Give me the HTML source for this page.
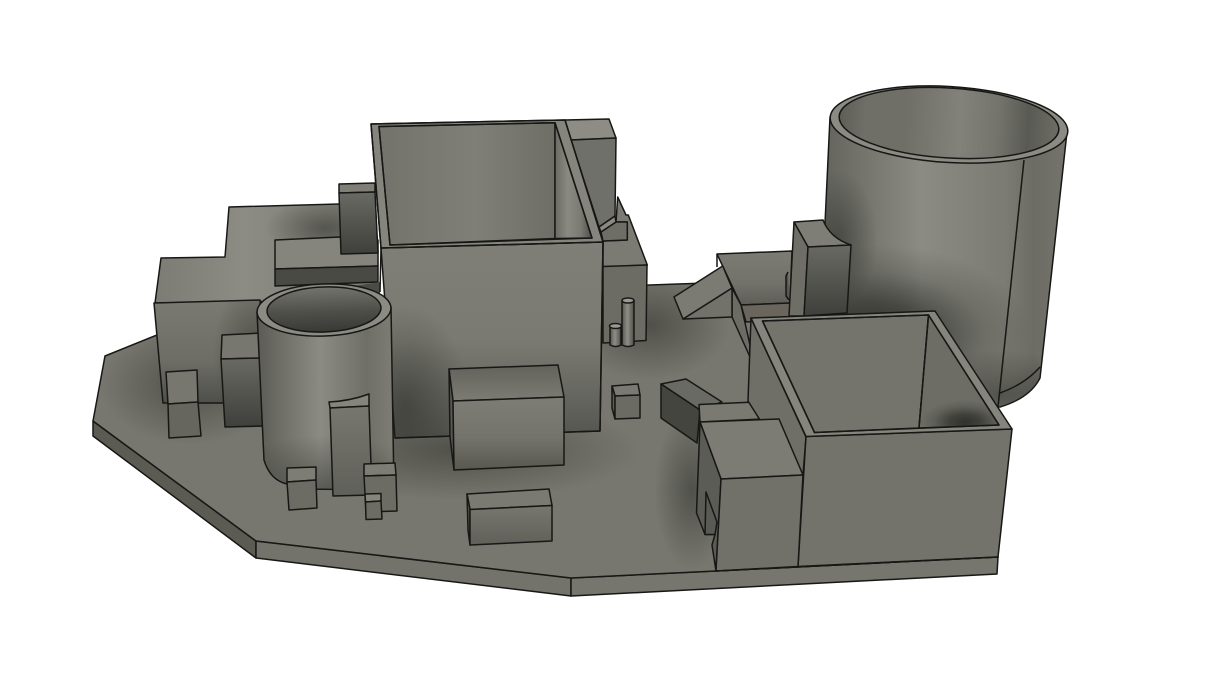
<!DOCTYPE html>
<html><head><meta charset="utf-8"><style>html,body{margin:0;padding:0;background:#fff;width:1223px;height:689px;overflow:hidden}svg{display:block}</style></head><body>
<svg width="1223" height="689" viewBox="0 0 1223 689" xmlns="http://www.w3.org/2000/svg">
<defs>
<radialGradient id="ao"><stop offset="0" stop-color="#2a2a26" stop-opacity=".9"/><stop offset=".35" stop-color="#2a2a26" stop-opacity=".65"/><stop offset=".7" stop-color="#2a2a26" stop-opacity=".2"/><stop offset="1" stop-color="#2a2a26" stop-opacity="0"/></radialGradient>
<radialGradient id="aoS"><stop offset="0" stop-color="#2a2a26" stop-opacity=".5"/><stop offset=".5" stop-color="#2a2a26" stop-opacity=".25"/><stop offset="1" stop-color="#2a2a26" stop-opacity="0"/></radialGradient>
<filter id="b6" x="-200%" y="-400%" width="500%" height="900%"><feGaussianBlur stdDeviation="6"/></filter>
<filter id="b14" x="-300%" y="-300%" width="700%" height="700%"><feGaussianBlur stdDeviation="14"/></filter>
<linearGradient id="v1" x1="0" y1="0" x2="0" y2="1"><stop offset="0" stop-color="#7d7d75"/><stop offset=".55" stop-color="#74746d"/><stop offset="1" stop-color="#58584f"/></linearGradient>
<linearGradient id="v2" x1="0" y1="0" x2="0" y2="1"><stop offset="0" stop-color="#77776f"/><stop offset="1" stop-color="#60605a"/></linearGradient>
<linearGradient id="v4" x1="0" y1="0" x2="0" y2="1"><stop offset="0" stop-color="#62625c"/><stop offset="1" stop-color="#7c7c74"/></linearGradient>
<linearGradient id="v3" x1="0" y1="0" x2="0" y2="1"><stop offset="0" stop-color="#6a6a64"/><stop offset="1" stop-color="#3f3f3b"/></linearGradient>
<linearGradient id="v5" x1="0" y1="0" x2="0" y2="1"><stop offset="0" stop-color="#7c7c74"/><stop offset=".6" stop-color="#72726b"/><stop offset="1" stop-color="#5e5e58"/></linearGradient>
<linearGradient id="tower" x1="0" y1="0" x2="0" y2="1"><stop offset="0" stop-color="#7f7f77"/><stop offset=".5" stop-color="#7a7a72"/><stop offset=".8" stop-color="#65655f"/><stop offset="1" stop-color="#55554f"/></linearGradient>
<linearGradient id="bld" x1="0" y1="0" x2="0" y2="1"><stop offset="0" stop-color="#7a7a72"/><stop offset=".6" stop-color="#6d6d66"/><stop offset="1" stop-color="#4f4f4a"/></linearGradient>
<linearGradient id="back" x1="0" y1="0" x2="1" y2="0"><stop offset="0" stop-color="#73736c"/><stop offset=".55" stop-color="#7f7f77"/><stop offset="1" stop-color="#6e6e67"/></linearGradient>
<linearGradient id="rwall" x1="0" y1="0" x2="1" y2="0"><stop offset="0" stop-color="#6a6a63"/><stop offset=".35" stop-color="#8a8a82"/><stop offset=".7" stop-color="#7a7a72"/><stop offset="1" stop-color="#4f4f4a"/></linearGradient>
<linearGradient id="top" x1="0" y1="0" x2="1" y2="0"><stop offset="0" stop-color="#7c7c74"/><stop offset=".4" stop-color="#8c8c84"/><stop offset="1" stop-color="#7a7a72"/></linearGradient>
<linearGradient id="cylB" gradientUnits="userSpaceOnUse" x1="824" y1="0" x2="1067" y2="0"><stop offset="0" stop-color="#64645e"/><stop offset=".16" stop-color="#74746d"/><stop offset=".4" stop-color="#8b8b84"/><stop offset=".75" stop-color="#7b7b73"/><stop offset=".86" stop-color="#6c6c65"/><stop offset="1" stop-color="#74746c"/></linearGradient>
<linearGradient id="cylI" gradientUnits="userSpaceOnUse" x1="839" y1="0" x2="1059" y2="0"><stop offset="0" stop-color="#5e5e58"/><stop offset=".12" stop-color="#6f6f68"/><stop offset=".3" stop-color="#6f6f68"/><stop offset=".55" stop-color="#82827a"/><stop offset=".72" stop-color="#74746d"/><stop offset=".86" stop-color="#5a5a54"/><stop offset="1" stop-color="#6d6d66"/></linearGradient>
<linearGradient id="smB" gradientUnits="userSpaceOnUse" x1="257" y1="0" x2="394" y2="0"><stop offset="0" stop-color="#5b5b55"/><stop offset=".15" stop-color="#6c6c65"/><stop offset=".46" stop-color="#8b8b84"/><stop offset=".8" stop-color="#6f6f68"/><stop offset="1" stop-color="#7d7d75"/></linearGradient>
<linearGradient id="smI" x1="0" y1="0" x2="0" y2="1"><stop offset="0" stop-color="#74746d"/><stop offset=".55" stop-color="#4f4f4a"/><stop offset="1" stop-color="#383835"/></linearGradient>
<linearGradient id="pin" x1="0" y1="0" x2="1" y2="0"><stop offset="0" stop-color="#56564f"/><stop offset=".45" stop-color="#8e8e86"/><stop offset="1" stop-color="#4f4f4a"/></linearGradient>
<clipPath id="cPlate"><polygon points="93,421 105,356 157,335 400,300 650,285 790,280 800,400 998,557 716,571 571,578 256,541"/></clipPath>
<clipPath id="cBig"><path d="M830,117 L820,330 L900,405 L1000,407 Q1030,398 1040,378 L1042,360 L1067,132 Z"/></clipPath>
<clipPath id="cBld"><polygon points="154,303 260,300 265,403 163,403"/></clipPath>
<clipPath id="cTop"><path d="M229,207 L339,204 L375,204 L378,300 L155,303 L161,258 L225,257 Z"/></clipPath>
<clipPath id="cSm"><path d="M257,312 L264,460 Q270,480 300,489 L394,490 L391,307 Z"/></clipPath>
<clipPath id="cTow"><polygon points="381,248 603,242 600,431 395,438"/></clipPath>
<clipPath id="cG"><polygon points="762.500,321 928.500,315 999,425 814.500,432.500"/></clipPath>
</defs>
<g stroke="#171715" stroke-width="1.5" stroke-linejoin="round">
<!-- plate -->
<polygon points="93,421 256,541 256,558 93,436" fill="#5b5a53"/>
<polygon points="256,541 571,578 571,596 256,558" fill="#73736b"/>
<polygon points="571,578 716,571 998,557 997,574 571,596" fill="#76766e"/>
<polygon points="93,421 105,356 157,335 400,300 650,285 790,280 800,400 998,557 716,571 571,578 256,541" fill="#77776f"/>
<g clip-path="url(#cPlate)" stroke="none">
<ellipse cx="190" cy="385" rx="90" ry="60" fill="url(#aoS)"/>
<ellipse cx="460" cy="450" rx="180" ry="50" fill="url(#aoS)"/>
<ellipse cx="650" cy="325" rx="80" ry="55" fill="url(#aoS)"/>
<ellipse cx="692" cy="490" rx="38" ry="80" fill="url(#aoS)"/>
</g>
<!-- big cylinder -->
<path d="M830,117 L820,330 L900,405 L1000,407 Q1030,398 1040,378 L1042,360 L1067,132 Z" fill="url(#cylB)"/>
<g clip-path="url(#cBig)" stroke="none">
<ellipse cx="880" cy="335" rx="150" ry="90" fill="url(#ao)"/>
<ellipse cx="838" cy="240" rx="40" ry="70" fill="url(#aoS)"/>
<ellipse cx="1000" cy="395" rx="90" ry="45" fill="url(#aoS)"/>
</g>
<path d="M1040,367 Q1025,384 1000,393" fill="none"/>
<path d="M1024,160 L998,407" fill="none"/>
<ellipse cx="949" cy="124.500" rx="119" ry="38" transform="rotate(3.500 949 124.500)" fill="#8b8b83"/>
<ellipse cx="949" cy="123" rx="110" ry="35" transform="rotate(3.500 949 123)" fill="url(#cylI)"/>
<!-- ramp block -->
<polygon points="717,254 792,251 790,303 741,305" fill="url(#v5)"/>
<path d="M717,254 L717,267" fill="none"/>
<polygon points="741,305 790,303 790,319 746,322" fill="#6a665e"/>
<polygon points="732,288 741,305 750,345 750,357 732,317" fill="#6c6c65"/>
<polygon points="683,319 732,288 732,317" fill="#72726b"/>
<polygon points="674,297 722.700,266 732,288 683,319" fill="#7b7b74"/>
<path d="M788,272 L786,276 L786,296 L789,300" fill="#55554f"/>
<!-- tall box near big cylinder -->
<path d="M794,222 L823,220 Q830,238 851,245 L808,247 Z" fill="#7e7e76"/>
<polygon points="794,222 808,247 804,316 789,316" fill="#6e6e67"/>
<polygon points="808,247 851,245 847,313 804,316" fill="url(#v3)"/>
<!-- left building -->
<path d="M229,207 L339,204 L375,204 L378,300 L155,303 L161,258 L225,257 Z" fill="url(#top)"/>
<g clip-path="url(#cTop)" stroke="none"><ellipse cx="325" cy="228" rx="60" ry="30" fill="url(#aoS)"/></g>
<polygon points="154,303 260,300 265,403 163,403" fill="url(#bld)"/>
<g clip-path="url(#cBld)" stroke="none"><ellipse cx="258" cy="355" rx="45" ry="80" fill="url(#aoS)"/></g>
<!-- bar & tall box -->
<polygon points="275,240 340,237 378,240 378,266 275,269" fill="#85857d"/>
<polygon points="275,269 378,266 378,282 275,286" fill="#4a4a45"/>
<polygon points="339,184 375,183 375,192 339,193" fill="#7f7f77"/>
<polygon points="339,193 375,192 378,253 341,254" fill="url(#v3)"/>
<polygon points="262,300 380,282 380,300 300,300" fill="#4b4b46" stroke="none"/>
<!-- rear right boxes -->
<polygon points="565,120 609,119 616,138 571,140" fill="#8d8d85"/>
<polygon points="571,140 616,138 615,216 599,227" fill="#70706a"/>
<polygon points="617.700,197 626,215 628.300,215 647.300,265 603,267 603,241 627.300,240 627.300,222 616,222" fill="#7b7b73"/>
<polygon points="601,232 616,222 627.300,222 627.300,240 603,241" fill="#6e6e67"/>
<polygon points="599,227 615,216 616,222 601,232" fill="#8a8a82"/>
<polygon points="603,266.500 647,265 646,340.500 603,343" fill="#6c6c65"/>
<!-- pins -->
<path d="M622,301 L622,345 Q628,348 634,345 L634,301 Z" fill="url(#pin)"/>
<ellipse cx="628" cy="300.500" rx="6" ry="2.500" fill="#9a9a92"/>
<path d="M610,327 L610,345 Q616,348 621,345 L621,327 Z" fill="url(#pin)"/>
<ellipse cx="615.500" cy="326" rx="6" ry="2.500" fill="#9a9a92"/>
<!-- tower -->
<polygon points="381,248 603,242 600,431 395,438" fill="url(#tower)"/>
<g clip-path="url(#cTow)" stroke="none"><ellipse cx="405" cy="405" rx="65" ry="100" fill="url(#aoS)"/></g>
<polygon points="371,124 565,120 603,242 381,248" fill="#85857d"/>
<polygon points="379,126.500 555,122.700 555,238.500 390,245" fill="url(#back)"/>
<polygon points="555,122.700 592,238 555,238.500" fill="url(#rwall)"/>
<path d="M371,124 L565,120 L603,242 L381,248 Z" fill="none"/>
<path d="M379,126.500 L555,122.700 L592,238 L390,245 Z" fill="none"/>
<path d="M603,242 L600,431 L395,438 M381,248 L380,292" fill="none"/>
<!-- cube -->
<polygon points="612,386 638,384 640,395 615,396" fill="#7a7a72"/>
<polygon points="612,386 615,396 615,419 612,408" fill="#5f5f59"/>
<polygon points="615,396 640,395 640,418 615,419" fill="#6b6b64"/>
<!-- box E -->
<polygon points="449,369 558,365 564,397 453,401" fill="url(#v4)"/>
<polygon points="449,369 453,401 454,470 450,437" fill="#5a5a54"/>
<polygon points="453,401 564,397 564,465 454,470" fill="url(#v1)"/>
<!-- small box left of cylinder -->
<polygon points="222,335 262,333 262,358 221,359" fill="#77776f"/>
<polygon points="221,359 262,358 265,426 225,427" fill="url(#v3)"/>
<!-- small cylinder -->
<path d="M257,312 L264,460 Q270,480 287,484 L300,489 L394,490 L391,307 Z" fill="url(#smB)"/>
<g clip-path="url(#cSm)" stroke="none">
<ellipse cx="325" cy="490" rx="110" ry="55" fill="url(#aoS)"/>
</g>
<ellipse cx="324" cy="310" rx="67" ry="26" transform="rotate(-2 324 310)" fill="#8b8b83"/>
<ellipse cx="324" cy="309.500" rx="57" ry="22.500" transform="rotate(-2 324 309.500)" fill="url(#smI)"/>
<!-- tab -->
<path d="M329,402 Q350,401 369,394 L369,406 L330,408 Z" fill="#85857d"/>
<polygon points="330,408 369,406 372,495 333,496" fill="url(#v2)"/>
<!-- small boxes -->
<polygon points="166,372 197,370 198,402 168,404" fill="#77776f"/>
<polygon points="168,404 198,402 201,436 169,438" fill="#66665f"/>
<polygon points="287,468 316,467 316,480 287,482" fill="#7d7d75"/>
<polygon points="287,482 316,480 317,508 289,510" fill="#6c6c65"/>
<polygon points="364,464 395,463 396,475 364,476" fill="#7d7d75"/>
<polygon points="364,476 396,475 397,511 366,512" fill="#6c6c65"/>
<polygon points="365,494 381,493.500 381,501 365.500,502" fill="#85857d"/>
<polygon points="365.500,502 381,501 382,519 366,519.500" fill="#6c6c65"/>
<!-- box D -->
<polygon points="467,494 549,489 552,505.500 470,509.500" fill="#7a7a72"/>
<polygon points="467,494 470,509.500 470,545 468,530" fill="#5a5a54"/>
<polygon points="470,509.500 552,505.500 552,541 470,545" fill="url(#v2)"/>
<!-- dark box -->
<polygon points="661,384 686,379 722,402 700,410" fill="#6a6a64"/>
<polygon points="661,384 700,410 697,443 661,418" fill="#45453f"/>
<!-- box near -->
<polygon points="699,404.500 755,402 762,419 700,422" fill="#7a7a72"/>
<!-- box G -->
<polygon points="751,318 806,437 803,475 760,420 748,401" fill="#6f6f68"/>
<polygon points="806,436.500 1012,429 998,557 798,566.500" fill="#73736c"/>
<polygon points="751,318 935,311 1012,429 806,436.500" fill="#85857d"/>
<polygon points="762.500,321 928.500,315 919,428 814.500,432.500" fill="#74746d"/>
<polygon points="928.500,315 999,425 919,428" fill="#6d6d66"/>
<g clip-path="url(#cG)" stroke="none"><ellipse cx="965" cy="422" rx="45" ry="22" fill="url(#ao)"/></g>
<polygon points="762.500,321 928.500,315 999,425 814.500,432.500" fill="none"/>
<path d="M928.500,315 L919,428" fill="none"/>
<!-- box F -->
<polygon points="700,422 779,419 803,475 721,479" fill="#7c7c74"/>
<path d="M700,422 L721,479 L716,571 L712,545 L715,534.500 L705,534.500 L696.500,513 Z" fill="#5c5c56"/>
<polygon points="721,479 803,475 798,566.500 716,571" fill="#71716a"/>
<path d="M706,492 L705,534.500 L715,534.500 L717,522 Z" fill="#5a5a54"/>
<path d="M716,571 L998,557" fill="none"/>
</g>
</svg>
</body></html>
